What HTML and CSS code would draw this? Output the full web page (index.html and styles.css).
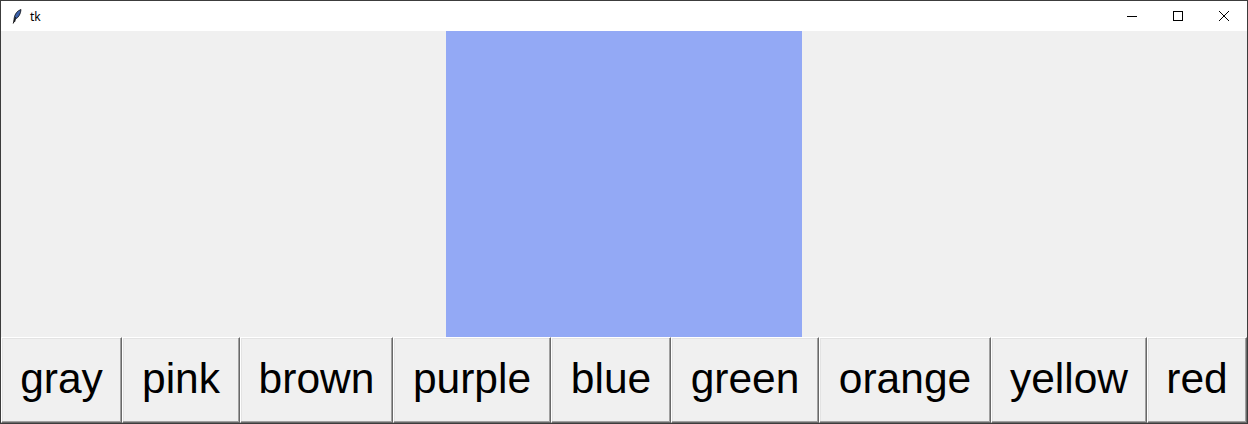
FILE: index.html
```html
<!DOCTYPE html>
<html>
<head>
<meta charset="utf-8">
<link rel="stylesheet" href="styles.css">
</head>
<body>
<div class="window">
  <div class="titlebar">
    <div class="title">
      <svg class="feather" width="10" height="15" viewBox="0 0 10 15">
        <path d="M9 0.5 C5.5 1.5 2.8 4.8 2.2 9 L1.8 12.5 L2.9 12.6 L3.4 10 C6.4 8.8 8.8 5 9 0.5 Z" fill="#3a5fa8" stroke="#111" stroke-width="0.8"/>
        <path d="M1.2 14.5 L3.6 8.2" stroke="#111" stroke-width="1"/>
      </svg>
      <span class="title-text">tk</span>
    </div>
    <div class="controls">
      <div class="ctl"><svg width="12" height="12" viewBox="0 0 12 12"><path d="M1 6.5 H11" stroke="#000" stroke-width="1"/></svg></div>
      <div class="ctl"><svg width="12" height="12" viewBox="0 0 12 12"><rect x="1.5" y="1.5" width="9" height="9" fill="none" stroke="#000" stroke-width="1"/></svg></div>
      <div class="ctl"><svg width="12" height="12" viewBox="0 0 12 12"><path d="M1 1 L11 11 M11 1 L1 11" stroke="#000" stroke-width="1"/></svg></div>
    </div>
  </div>
  <div class="canvas-area">
    <div class="square"></div>
  </div>
  <div class="buttons">
    <div class="btn b-gray">gray</div>
    <div class="btn b-pink">pink</div>
    <div class="btn b-brown">brown</div>
    <div class="btn b-purple">purple</div>
    <div class="btn b-blue">blue</div>
    <div class="btn b-green">green</div>
    <div class="btn b-orange">orange</div>
    <div class="btn b-yellow">yellow</div>
    <div class="btn b-red">red</div>
  </div>
</div>
</body>
</html>
```

FILE: styles.css
```css
html, body {
  margin: 0;
  padding: 0;
  background: #f0f0f0;
}
.window {
  width: 1248px;
  height: 424px;
  box-sizing: border-box;
  border: 1px solid #3c3c3c;
  display: flex;
  flex-direction: column;
  background: #f0f0f0;
  overflow: hidden;
}
.titlebar {
  height: 30px;
  background: #ffffff;
  display: flex;
  align-items: center;
  justify-content: space-between;
  flex: none;
}
.title {
  display: flex;
  align-items: center;
  padding-left: 11px;
  gap: 8px;
}
.feather {
  display: block;
}
.title-text {
  font-family: "Noto Sans", "DejaVu Sans", sans-serif;
  font-size: 12px;
  color: #000;
}
.controls {
  display: flex;
  height: 30px;
}
.ctl {
  width: 46px;
  height: 30px;
  display: flex;
  align-items: center;
  justify-content: center;
}
.ctl svg {
  display: block;
}
.canvas-area {
  height: 306px;
  flex: none;
  display: flex;
  justify-content: center;
}
.square {
  width: 356px;
  height: 306px;
  background: #93a9f5;
}
.buttons {
  display: flex;
  height: 86px;
  flex: none;
}
.btn {
  box-sizing: border-box;
  height: 86px;
  display: flex;
  align-items: center;
  justify-content: center;
  font-family: "Liberation Sans", Arial, sans-serif;
  font-size: 42.5px;
  color: #000;
  background: #f0f0f0;
  border-top: 1px solid #ffffff;
  border-left: 1px solid #ffffff;
  border-right: 1px solid #696969;
  border-bottom: 1px solid #696969;
  box-shadow: inset -1px -1px 0 #a0a0a0, inset 1px 1px 0 #e3e3e3;
  padding-bottom: 2px;
  flex: none;
}
.b-gray { width: 121px; }
.b-pink { width: 118px; }
.b-brown { width: 153px; }
.b-purple { width: 158px; }
.b-blue { width: 120px; }
.b-green { width: 148px; }
.b-orange { width: 172px; }
.b-yellow { width: 156px; }
.b-red { width: 100px; }
```
